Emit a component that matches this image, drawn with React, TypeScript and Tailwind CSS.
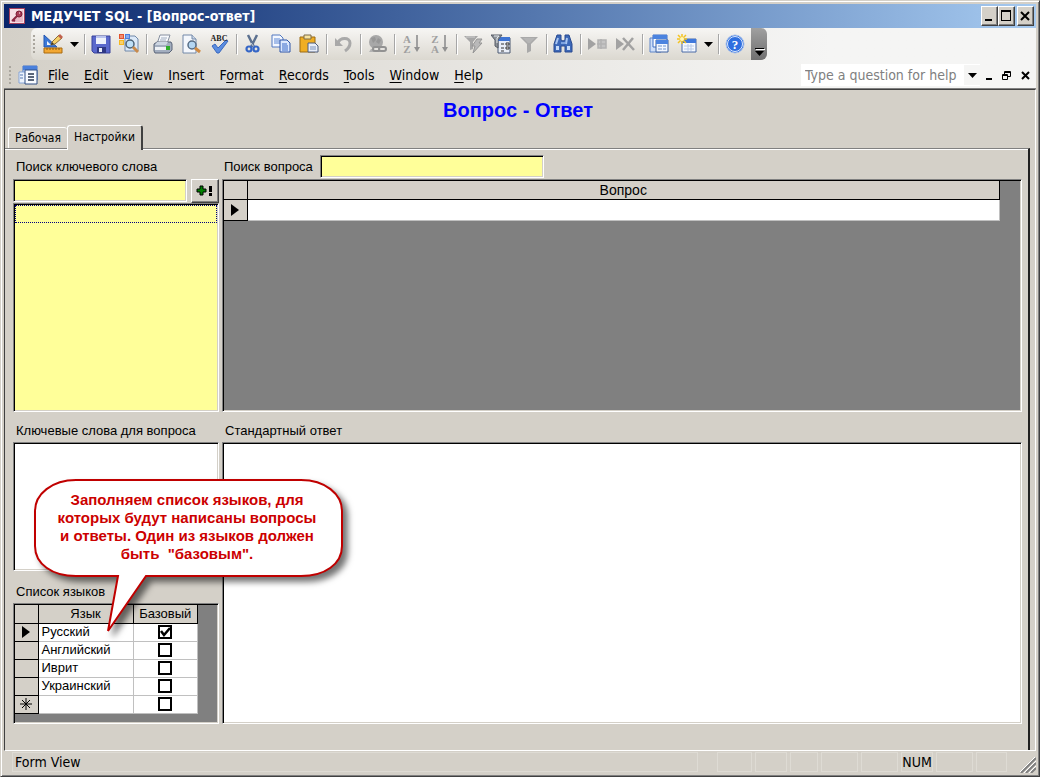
import { useState } from "react";

const SUNKEN = "border border-t-[#808080] border-l-[#808080] border-b-white border-r-white shadow-[inset_1px_1px_#000,inset_-1px_-1px_#d4d0c8]";
const RAISED = "border border-t-white border-l-white border-b-[#404040] border-r-[#404040] shadow-[inset_-1px_-1px_#808080] bg-[#d4d0c8]";
const UI_FONT = "font-['DejaVu_Sans_Condensed','DejaVu_Sans',sans-serif]";

interface IconProps {
  name: string;
}

const Icon: React.FC<IconProps> = ({ name }) => {
  const shapes: Record<string, React.ReactNode> = {
    design: (
      <>
        <path d="M1 1v12h13z" fill="#3b78d8" stroke="#2456b0" />
        <path d="M4 7v4h4z" fill="#f0f3f8" />
        <path d="M1 14h18v5H1z" fill="#f3a833" stroke="#a86a10" />
        <path d="M4 14v2M7 14v2M10 14v2M13 14v2M16 14v2" stroke="#8a5a10" />
        <path d="M8 11l1-3 7-7 3 3-7 6z" fill="#f4cf6a" stroke="#8c6c34" />
        <path d="M15 2l2-2 3 3-2 2z" fill="#c0604c" />
        <path d="M8 11l1-3 2 2z" fill="#333" />
      </>
    ),
    save: (
      <>
        <path d="M1 2h18v17H3l-2-2z" fill="#5a68cc" stroke="#39429c" />
        <path d="M5 2h10v8H5z" fill="#eef1fb" />
        <path d="M5 2h10v2H5z" fill="#b9c3ee" />
        <path d="M6 13h9v6H6z" fill="#2f3885" />
        <path d="M8 14h3v4H8z" fill="#e8ebf8" />
      </>
    ),
    search: (
      <>
        <path d="M8 2h8l3 3v12H6V4z" fill="#dce9f8" stroke="#7088a8" />
        <path d="M0 0h5v5H0z" fill="#e2512c" />
        <path d="M6 0h5v5H6z" fill="#4a7fe0" />
        <path d="M0 6h5v5H0z" fill="#f6b91f" />
        <path d="M1 1h3v3H1zM7 1h3v3H7zM1 7h3v3H1z" fill="#fff" opacity=".35" />
        <circle cx="11" cy="10" r="4" fill="#bfe0f8" stroke="#4d6478" strokeWidth="1.500" />
        <path d="M14 13l5 5" stroke="#c98b4c" strokeWidth="3" />
      </>
    ),
    print: (
      <>
        <path d="M7 1h10l-3 9H4z" fill="#f7f9fc" stroke="#8790a0" />
        <path d="M8 4h6M7 6h6" stroke="#a0acc0" />
        <path d="M1 10l3-2h14l1 2v6l-3 3H2l-1-2z" fill="#a3aebf" stroke="#5a6578" />
        <path d="M4 8h11l-2 3H2z" fill="#cdd6e2" />
        <path d="M2 13h11v3H2z" fill="#eef1f5" />
        <path d="M13 12h4v4h-4z" fill="#2fae2a" />
      </>
    ),
    preview: (
      <>
        <path d="M2 1h9l4 4v14H2z" fill="#f4f7fc" stroke="#7288a8" />
        <path d="M11 1v4h4" fill="#cdd8e8" stroke="#7288a8" />
        <circle cx="11" cy="11" r="4" fill="#b4d6f2" stroke="#566c84" strokeWidth="1.500" />
        <path d="M14 14l5 4" stroke="#cf8b45" strokeWidth="3" />
      </>
    ),
    spell: (
      <>
        <path d="M3 12l3-2 3 4 8-8 2 1-9 12H8z" fill="#5b8de0" stroke="#3a68bd" />
        <text x="10" y="7" textAnchor="middle" fontSize="8" fontWeight="bold" fill="#222">ABC</text>
      </>
    ),
    cut: (
      <>
        <path d="M5 1l6 12M14 1L8 13" stroke="#5d7190" strokeWidth="2.500" />
        <path d="M8 9l3 4" stroke="#c9d4e4" />
        <circle cx="6" cy="15" r="2.500" fill="none" stroke="#3566c6" strokeWidth="2.200" />
        <circle cx="13" cy="15" r="2.500" fill="none" stroke="#3566c6" strokeWidth="2.200" />
      </>
    ),
    copy: (
      <>
        <path d="M1 1h8l3 3v9H1z" fill="#f3f7ff" stroke="#5379c0" />
        <path d="M3 5h6M3 7h6M3 9h6" stroke="#5b86d4" />
        <path d="M9 6h7l3 3v9H9z" fill="#dce8fd" stroke="#2c55a8" />
        <path d="M11 10h5M11 12h6M11 14h6M11 16h6" stroke="#3b6bc8" />
      </>
    ),
    paste: (
      <>
        <path d="M1 3h15v15H1z" fill="#f0ae22" stroke="#9a6b14" />
        <path d="M5 1h7v4H5z" fill="#f7e3a0" stroke="#7a6a48" />
        <path d="M9 9h7l3 3v6H9z" fill="#e9eef8" stroke="#4c5c7c" />
        <path d="M11 13h6M11 15h6" stroke="#7a92bc" />
      </>
    ),
    undo: (
      <>
        <path d="M2 4v8h8z" fill="#a9a9a9" />
        <path d="M5 9c2-6 12-6 12 0 0 4-2 6-5 8" fill="none" stroke="#a9a9a9" strokeWidth="3" />
      </>
    ),
    globe: (
      <>
        <circle cx="9" cy="8" r="7" fill="#a8a8a8" />
        <path d="M4 4l4-1 1 3-3 3zM11 4l3 2-2 4-3-2z" fill="#979797" />
        <path d="M2 18l2-3h10v3z" fill="#b4b4b4" />
        <rect x="6" y="13" width="7" height="4" rx="2" fill="#e5e3df" stroke="#929292" strokeWidth="2" />
        <rect x="12" y="13" width="7" height="4" rx="2" fill="#e5e3df" stroke="#929292" strokeWidth="2" />
      </>
    ),
    az: (
      <>
        <text x="6" y="9" textAnchor="middle" fontSize="11" fontWeight="bold" fill="#a0a0a0">A</text>
        <text x="6" y="19" textAnchor="middle" fontSize="11" fontWeight="bold" fill="#a0a0a0">Z</text>
        <path d="M16 1v14" stroke="#a0a0a0" strokeWidth="2" />
        <path d="M13 13h6l-3 5z" fill="#909090" />
      </>
    ),
    za: (
      <>
        <text x="6" y="9" textAnchor="middle" fontSize="11" fontWeight="bold" fill="#a0a0a0">Z</text>
        <text x="6" y="19" textAnchor="middle" fontSize="11" fontWeight="bold" fill="#a0a0a0">A</text>
        <path d="M16 1v14" stroke="#a0a0a0" strokeWidth="2" />
        <path d="M13 13h6l-3 5z" fill="#909090" />
      </>
    ),
    filterFlash: (
      <>
        <path d="M1 2h14l-5 6v7l-3 1V8z" fill="#a6a6a6" />
        <path d="M3 3h9" stroke="#cfcfcf" />
        <path d="M14 5h5l-3 4h3l-9 10 2-7H9z" fill="#b9b9b9" stroke="#959595" />
      </>
    ),
    filterForm: (
      <>
        <path d="M7 4h12v15H7z" fill="#e9eef8" stroke="#4a5870" />
        <path d="M7 3h12v4H7z" fill="#3f74d2" />
        <path d="M10 10h3M10 14h3M10 17h3" stroke="#333" />
        <path d="M15 9h3v2h-3zM15 13h3v2h-3z" fill="#fff" stroke="#333" />
        <path d="M0 1h11L7 6v8l-3-2V6z" fill="#8b9198" stroke="#565d66" />
        <path d="M3 2h5L6 4v5" fill="none" stroke="#e6e9ec" />
      </>
    ),
    filter: (
      <>
        <path d="M1 3h18l-7 7v7l-4 2v-9z" fill="#a9a9a9" />
        <path d="M4 4h12l-5 5H9z" fill="#b5b5b5" />
      </>
    ),
    find: (
      <>
        <path d="M4 1h4v5l2 1 2-1V1h4l3 9v8h-7v-6H8v6H1v-8z" fill="#3c68b8" stroke="#2a4b90" />
        <path d="M3 10l2-6M13 10l1-6" stroke="#a9c6f2" strokeWidth="2" />
        <path d="M3 12h3v4H3zM14 12h3v4h-3z" fill="#c7dbf8" />
        <path d="M8 8h4v2H8z" fill="#7da3e0" />
      </>
    ),
    newRecord: (
      <>
        <path d="M1 4l8 6-8 6z" fill="#a2a2a2" />
        <path d="M11 6h8v8h-8zM14 5v10M10 10h9" fill="#c4c4c4" stroke="#b2b2b2" strokeWidth="1.500" />
      </>
    ),
    deleteRecord: (
      <>
        <path d="M1 4l8 6-8 6z" fill="#a2a2a2" />
        <path d="M8 4l11 12M18 4L8 16" stroke="#a2a2a2" strokeWidth="2.500" />
      </>
    ),
    database: (
      <>
        <path d="M1 4h11v14H1z" fill="#cfdff8" stroke="#5d84c8" />
        <path d="M4 1h14v12H4z" fill="#fff" stroke="#3d6fc8" />
        <path d="M4 1h14v4H4z" fill="#4b83df" />
        <path d="M7 6h12v12H7z" fill="#f1f6ff" stroke="#3c619f" />
        <path d="M7 6h12v4H7z" fill="#4b83df" />
        <path d="M9 12h4M9 15h4M14 12h3M14 15h3" stroke="#6f94d0" />
      </>
    ),
    newObject: (
      <>
        <path d="M5 5h14v13H5z" fill="#f4f8ff" stroke="#4a6aa6" />
        <path d="M5 5h14v4H5z" fill="#3f78dc" />
        <path d="M7 12h10M7 15h10M11 10v7M14 10v7" stroke="#b8cae8" />
        <path d="M5 0v10M0 5h10M1 1l8 8M9 1L1 9" stroke="#f4c321" strokeWidth="1.500" />
        <circle cx="5" cy="5" r="2" fill="#fff7b8" />
      </>
    ),
    help: (
      <>
        <circle cx="10" cy="10" r="9" fill="#2f6fe0" stroke="#a9c2ea" />
        <circle cx="10" cy="10" r="7.500" fill="none" stroke="#dbe7fb" />
        <text x="10" y="15" textAnchor="middle" fontSize="13" fontWeight="bold" fill="#fff">?</text>
      </>
    ),
    form: (
      <>
        <path d="M5 1h14v14H5z" fill="#dce8fb" stroke="#4272c8" />
        <path d="M5 1h14v4H5z" fill="#4a80dc" />
        <path d="M1 7h11v11H1z" fill="#edf3fd" stroke="#86a5d8" />
        <path d="M7 5h12v14H7z" fill="#f8faff" stroke="#314e84" />
        <path d="M10 9h6M10 12h6M10 15h6" stroke="#27364f" strokeWidth="1.500" />
        <path d="M2 10h3M2 13h3" stroke="#5577b0" />
      </>
    ),
  };
  return (
    <svg viewBox="0 0 20 20" className="size-5 shrink-0 font-['Liberation_Serif',serif]" aria-hidden="true">
      {shapes[name]}
    </svg>
  );
};

const toolbar = [
  "design", "arrow", "|", "save", "search", "|", "print", "preview", "spell", "|",
  "cut", "copy", "paste", "|", "undo", "|", "globe", "|", "az", "za", "|",
  "filterFlash", "filterForm", "filter", "|", "find", "|", "newRecord", "deleteRecord", "|",
  "database", "newObject", "arrow", "|", "help",
];

const menuItems = [
  ["", "F", "ile"],
  ["", "E", "dit"],
  ["", "V", "iew"],
  ["", "I", "nsert"],
  ["F", "o", "rmat"],
  ["", "R", "ecords"],
  ["", "T", "ools"],
  ["", "W", "indow"],
  ["", "H", "elp"],
];

const DownArrow = () => (
  <svg viewBox="0 0 9 5" className="h-[5px] w-[9px] shrink-0" aria-hidden="true">
    <path d="M0 0h9L4.500 5z" />
  </svg>
);

const Grip = () => (
  <span className="flex flex-col gap-[2px]">
    {[0, 1, 2, 3, 4].map((dot) => (
      <span key={dot} className="size-[2px] bg-[#aaa69e]" />
    ))}
  </span>
);

const CurrentRow = () => (
  <svg viewBox="0 0 8 12" className="mx-auto h-3 w-2" aria-label="current record">
    <path d="M0 0l8 6-8 6z" />
  </svg>
);

const TitleBar = () => (
  <header className="flex h-6 items-center bg-linear-to-r from-[#0a246a] to-[#a6caf0] pr-[2px] pl-[5px]">
    <svg viewBox="0 0 16 16" className="size-4" aria-hidden="true">
      <path d="M0 0h16v16H0z" fill="#a5405c" />
      <path d="M1 1h14v14H1z" fill="#f6dfe6" />
      <path d="M14 2v12H2z" fill="#e8b8c6" />
      <circle cx="10" cy="6" r="3" fill="#a83c58" stroke="#7c2038" />
      <path d="M8 8l-5 5M4 12l2 1" stroke="#8c2844" strokeWidth="2" />
      <path d="M10 5h1" stroke="#fff" />
    </svg>
    <h1 className="ml-[6px] grow text-[14px] leading-5 font-bold whitespace-nowrap text-white">МЕДУЧЕТ SQL - [Вопрос-ответ]</h1>
    <button aria-label="Minimize" className={`h-5 w-[17px] ${RAISED}`}>
      <svg viewBox="0 0 15 18"><path d="M3 12h7v2H3z" /></svg>
    </button>
    <button aria-label="Maximize" className={`h-5 w-[17px] ${RAISED}`}>
      <svg viewBox="0 0 15 18"><path d="M2 3h10v11H2zM3 5v8h8V5z" fillRule="evenodd" /></svg>
    </button>
    <button aria-label="Close" className={`ml-[2px] h-5 w-[17px] ${RAISED}`}>
      <svg viewBox="0 0 15 18"><path d="M3 5l8 8M11 5l-8 8" stroke="#000" strokeWidth="2" /></svg>
    </button>
  </header>
);

const Toolbar = () => (
  <div className="ml-[27px] flex h-8 w-fit items-stretch overflow-hidden rounded-md bg-linear-to-b from-[#f7f6f4] to-[#dbd8d0]">
    <div className="flex items-center pr-[2px] pl-[2px]">
      <span className="w-[6px]"><Grip /></span>
      {toolbar.map((item, index) => {
        if (item === "|") {
          return <span key={index} className="flex w-[6px] justify-center"><span className="h-5 w-px bg-[#a6a6a6] shadow-[1px_1px_#fff]" /></span>;
        }
        if (item === "arrow") {
          return <button key={index} aria-label="More" className="flex w-[14px] justify-center"><DownArrow /></button>;
        }
        return <button key={index} aria-label={item} className="flex w-7 justify-center"><Icon name={item} /></button>;
      })}
    </div>
    <button aria-label="Toolbar options" className="flex w-4 flex-col items-center justify-end gap-[2px] bg-linear-to-b from-[#a0a0a0] to-[#707070] pb-1">
      <span className="h-px w-[9px] bg-black shadow-[1px_1px_#fff]" />
      <DownArrow />
    </button>
  </div>
);

const MenuBar = () => (
  <nav className="flex h-7 items-center pt-[2px] pr-[5px] pl-[5px] text-[14px] leading-5">
    <Grip />
    <span className="mr-[10px] ml-[7px]"><Icon name="form" /></span>
    <div className="flex gap-[15px]">
      {menuItems.map(([before, key, after]) => (
        <button key={key + after}>{before}<span className="underline underline-offset-2">{key}</span>{after}</button>
      ))}
    </div>
    <div className="ml-auto flex h-[22px] items-center bg-white">
      <input aria-label="Type a question for help" placeholder="Type a question for help" className="w-[163px] pl-1 outline-none placeholder:text-[#808080]" />
      <button aria-label="Show questions" className="flex h-5 w-4 items-center justify-center bg-[#f5f5f4]"><DownArrow /></button>
    </div>
    <div className="flex w-[51px] items-center justify-between pr-px pl-[6px]">
      <button aria-label="Minimize form"><svg viewBox="0 0 6 9" className="h-[9px] w-[6px]"><path d="M0 7h6v2H0z" /></svg></button>
      <button aria-label="Restore form"><svg viewBox="0 0 9 9" className="size-[9px]" fill="none" stroke="#000"><path d="M2.500 3V.5h6v5H6M3 1.500h5M.5 3.500h5v5h-5zM1 4.500h4" /></svg></button>
      <button aria-label="Close form"><svg viewBox="0 0 9 9" className="size-[9px]"><path d="M1 1l7 7M8 1L1 8" stroke="#000" strokeWidth="2" /></svg></button>
    </div>
  </nav>
);

const QuestionGrid = () => (
  <div className={`h-[233px] bg-[#808080] p-px ${SUNKEN}`}>
    <table className="w-[calc(100%-20px)] table-fixed border-collapse text-[14px] leading-4">
      <thead>
        <tr className="h-[18px] bg-[#d4d0c8]">
          <th className="w-[23px] border-r border-b border-black" />
          <th className="border-r border-b border-black font-normal">Вопрос</th>
        </tr>
      </thead>
      <tbody>
        <tr className="h-[21px] bg-white">
          <td className="border-r border-b border-black bg-[#d4d0c8]"><CurrentRow /></td>
          <td className="border-r border-b border-[#c0c0c0]" />
        </tr>
      </tbody>
    </table>
  </div>
);

const LanguageTable = () => {
  const [languages, setLanguages] = useState([
    { name: "Русский", base: true },
    { name: "Английский", base: false },
    { name: "Иврит", base: false },
    { name: "Украинский", base: false },
    { name: "", base: false },
  ]);

  const toggle = (index: number) => {
    setLanguages(languages.map((lang, i) => (i === index ? { ...lang, base: !lang.base } : lang)));
  };

  return (
    <div className={`h-[121px] bg-[#808080] p-px ${SUNKEN}`}>
      <table className="w-[183px] table-fixed border-collapse text-[13px] leading-4">
        <thead>
          <tr className="h-[18px] bg-[#d4d0c8]">
            <th className="w-[23px] border-r border-b border-black" />
            <th className="w-[95px] border-r border-b border-black font-normal">Язык</th>
            <th className="border-r border-b border-black font-normal">Базовый</th>
          </tr>
        </thead>
        <tbody>
          {languages.map((lang, index) => (
            <tr key={index} className="h-[18px] bg-white">
              <td className="border-r border-b border-black bg-[#d4d0c8]">
                {index === 0 && <CurrentRow />}
                {lang.name === "" && (
                  <svg viewBox="0 0 12 12" className="mx-auto size-3" stroke="#000" aria-label="new record">
                    <path d="M6 0v12M0 6h12M2 2l8 8M10 2l-8 8" />
                  </svg>
                )}
              </td>
              <td className="border-r border-b border-[#c0c0c0] pl-[3px]">{lang.name}</td>
              <td className="border-r border-b border-[#c0c0c0]">
                <label className="relative mx-auto block size-[14px]">
                  <input type="checkbox" aria-label={`Базовый ${lang.name}`} checked={lang.base} onChange={() => toggle(index)} className="peer block size-[14px] appearance-none border-2 border-black bg-white" />
                  <svg viewBox="0 0 14 14" className="absolute inset-0 hidden peer-checked:block" aria-hidden="true">
                    <path d="M3 6l3 4 6-7" fill="none" stroke="#000" strokeWidth="2.500" />
                  </svg>
                </label>
              </td>
            </tr>
          ))}
        </tbody>
      </table>
    </div>
  );
};

const Callout = () => (
  <div className="absolute top-[67px] left-[21px] h-[160px] w-[316px]">
    <svg viewBox="0 0 316 160" className="absolute inset-0 drop-shadow-[5px_5px_3px_rgba(0,0,0,0.55)]" aria-hidden="true">
      <path d="M42 1H267C291 1 308 15 308 32V67C308 85 291 97 267 97H112L74 152L84 97H42C18 97 1 85 1 67V32C1 15 18 1 42 1Z" fill="#fff" stroke="#c00000" strokeWidth="2" />
    </svg>
    <p className="relative w-[306px] pt-3 text-center font-['Liberation_Sans',sans-serif] text-[15px] leading-[18px] font-bold whitespace-pre text-[#cc0000]">
      {"Заполняем список языков, для\nкоторых будут написаны вопросы\nи ответы. Один из языков должен\nбыть  \"базовым\"."}
    </p>
  </div>
);

const StatusBar = () => (
  <footer className="flex h-[22px] items-center gap-[3px] pl-2 text-[14px] leading-[18px]">
    <span className="h-5 grow border border-[#dedbd4] pl-[2px]">Form View</span>
    <span className="w-[13px]" />
    <span className="h-5 w-[35px] border border-[#dedbd4]" />
    <span className="h-5 w-8 border border-[#dedbd4]" />
    <span className="h-5 w-7 border border-[#dedbd4]" />
    <span className="h-5 w-[37px] border border-[#dedbd4]" />
    <span className="h-5 w-[37px] border border-[#dedbd4]" />
    <span className="h-5 w-8 border border-[#dedbd4] text-center">NUM</span>
    <span className="h-5 w-[37px] border border-[#dedbd4]" />
    <span className="h-5 w-[31px] border border-[#dedbd4]" />
    <svg viewBox="0 0 16 16" className="ml-[10px] size-4 self-end" aria-hidden="true">
      <path d="M1 16L16 1M6 16L16 6M11 16l5-5" stroke="#808080" strokeWidth="2" />
      <path d="M0 15L15 0M4 16L16 4M9 16l7-7" stroke="#fff" />
    </svg>
  </footer>
);

export default function App() {
  const [tab, setTab] = useState("Настройки");

  return (
    <div className={`flex min-h-screen flex-col border border-t-[#d4d0c8] border-l-[#d4d0c8] border-r-[#404040] border-b-[#404040] bg-[#d4d0c8] p-[3px] text-black shadow-[inset_1px_1px_#fff,inset_-1px_-1px_#808080] ${UI_FONT}`}>
      <TitleBar />
      <div className="border-b border-[#808080] bg-linear-to-r from-[#d4d0c8] to-[#f5f5f4] to-80%">
        <Toolbar />
        <MenuBar />
      </div>
      <main className="flex grow flex-col border border-t-[#404040] border-l-[#404040] border-r-white border-b-white font-['Liberation_Sans',sans-serif] text-[13px] leading-4">
        <h2 className="pt-2 pr-1 text-center text-[20px] leading-6 font-bold text-[#0000ff]">Вопрос - Ответ</h2>
        <div role="tablist" className={`flex items-end pt-[3px] pl-[3px] text-[12px] ${UI_FONT}`}>
          {["Рабочая", "Настройки"].map((name) => (
            <button
              key={name}
              role="tab"
              aria-selected={tab === name}
              onClick={() => setTab(name)}
              className={tab === name
                ? "z-10 -mb-[2px] h-[25px] w-[76px] rounded-t-[3px] border-t border-r-2 border-l border-t-white border-l-white border-r-[#404040] bg-[#d4d0c8] pb-[2px]"
                : "h-[21px] w-[59px] rounded-t-[3px] border-t border-l border-white"}
            >
              {name}
            </button>
          ))}
        </div>
        <div className="mr-[5px] grid grow grid-cols-[206px_minmax(0,1fr)] content-start gap-x-[3px] border-t border-r-2 border-t-[#808080] border-r-[#202020] pr-[6px] pb-6 pl-2 shadow-[inset_0_1px_#fff]">
          <section>
            <label htmlFor="keyword" className="block h-[30px] pt-[10px] pl-[3px]">Поиск ключевого слова</label>
            <div className="flex justify-between">
              <input id="keyword" className={`h-[23px] w-[174px] bg-[#ffff99] px-1 outline-none ${SUNKEN}`} />
              <button aria-label="Добавить" className={`flex h-6 w-7 items-center justify-center gap-1 ${RAISED}`}>
                <svg viewBox="0 0 18 12" className="h-3 w-[18px]">
                  <path d="M4 1h3v3h3v3H7v3H4V7H1V4h3z" fill="#008000" stroke="#000" />
                  <path d="M13 1h3v6h-3zM13 8h3v3h-3z" />
                </svg>
              </button>
            </div>
            <div role="listbox" aria-label="Ключевые слова" tabIndex={0} className={`h-[209px] bg-[#ffff99] p-px outline-none ${SUNKEN}`}>
              <div role="option" aria-selected="false" className="h-[18px] border border-dotted border-[#000080]" />
            </div>
          </section>
          <section>
            <div className="flex h-[30px] items-start pt-[6px]">
              <label htmlFor="question" className="w-[98px] pt-1 pl-[2px]">Поиск вопроса</label>
              <input id="question" className={`h-[23px] w-[224px] bg-[#ffff99] px-1 outline-none ${SUNKEN}`} />
            </div>
            <QuestionGrid />
          </section>
          <section className="relative">
            <label htmlFor="keywords" className="block h-[30px] pt-[11px] pl-[3px]">Ключевые слова для вопроса</label>
            <textarea id="keywords" className={`block h-[129px] w-full resize-none bg-white p-1 outline-none ${SUNKEN}`} />
            <p className="h-8 pt-[13px] pl-[3px]">Список языков</p>
            <LanguageTable />
            <Callout />
          </section>
          <section className="flex flex-col">
            <label htmlFor="answer" className="block h-[30px] pt-[11px] pl-[3px]">Стандартный ответ</label>
            <textarea id="answer" className={`block w-full grow resize-none bg-white p-1 outline-none ${SUNKEN}`} />
          </section>
        </div>
      </main>
      <StatusBar />
    </div>
  );
}
